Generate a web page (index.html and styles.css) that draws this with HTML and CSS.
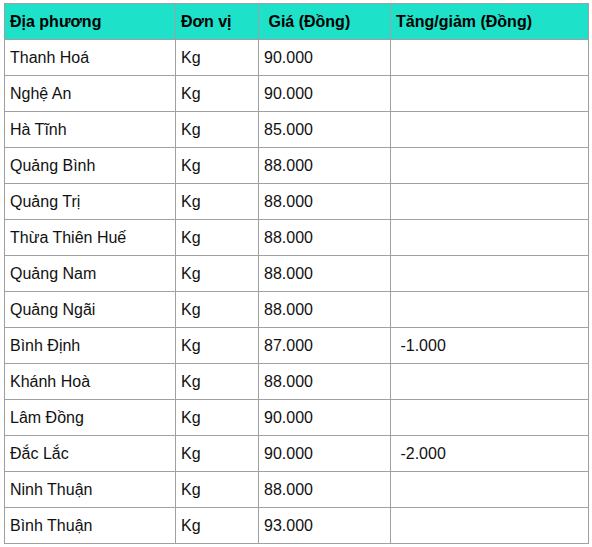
FILE: index.html
```html
<!DOCTYPE html>
<html>
<head>
<meta charset="utf-8">
<link rel="stylesheet" href="styles.css">
</head>
<body>
<table class="price">
<colgroup><col class="c1"><col class="c2"><col class="c3"><col class="c4"></colgroup>
<thead>
<tr><th>Địa phương</th><th>Đơn vị</th><th>&nbsp;Giá (Đồng)</th><th>Tăng/giảm (Đồng)</th></tr>
</thead>
<tbody>
<tr><td>Thanh Hoá</td><td>Kg</td><td>90.000</td><td></td></tr>
<tr><td>Nghệ An</td><td>Kg</td><td>90.000</td><td></td></tr>
<tr><td>Hà Tĩnh</td><td>Kg</td><td>85.000</td><td></td></tr>
<tr><td>Quảng Bình</td><td>Kg</td><td>88.000</td><td></td></tr>
<tr><td>Quảng Trị</td><td>Kg</td><td>88.000</td><td></td></tr>
<tr><td>Thừa Thiên Huế</td><td>Kg</td><td>88.000</td><td></td></tr>
<tr><td>Quảng Nam</td><td>Kg</td><td>88.000</td><td></td></tr>
<tr><td>Quảng Ngãi</td><td>Kg</td><td>88.000</td><td></td></tr>
<tr><td>Bình Định</td><td>Kg</td><td>87.000</td><td>&nbsp;-1.000</td></tr>
<tr><td>Khánh Hoà</td><td>Kg</td><td>88.000</td><td></td></tr>
<tr><td>Lâm Đồng</td><td>Kg</td><td>90.000</td><td></td></tr>
<tr><td>Đắc Lắc</td><td>Kg</td><td>90.000</td><td>&nbsp;-2.000</td></tr>
<tr><td>Ninh Thuận</td><td>Kg</td><td>88.000</td><td></td></tr>
<tr><td>Bình Thuận</td><td>Kg</td><td>93.000</td><td></td></tr>
</tbody>
</table>
</body>
</html>
```
FILE: styles.css
```css
html, body { margin: 0; padding: 0; background: #fff; }
body { padding: 3px 0 0 4px; font-family: "Liberation Sans", Arial, sans-serif; font-size: 16px; color: #111; }
.price { border-collapse: collapse; table-layout: fixed; width: 584px; }
.c1 { width: 171px; }
.c2 { width: 83px; }
.c3 { width: 132px; }
.c4 { width: 198px; }
.price th, .price td {
  border: 1px solid #a0a0a0;
  height: 36px;
  padding: 0 5px;
  text-align: left;
  vertical-align: middle;
  box-sizing: border-box;
  white-space: nowrap;
}
.price th { background: #1de2c9; font-weight: bold; color: #000; }
```
